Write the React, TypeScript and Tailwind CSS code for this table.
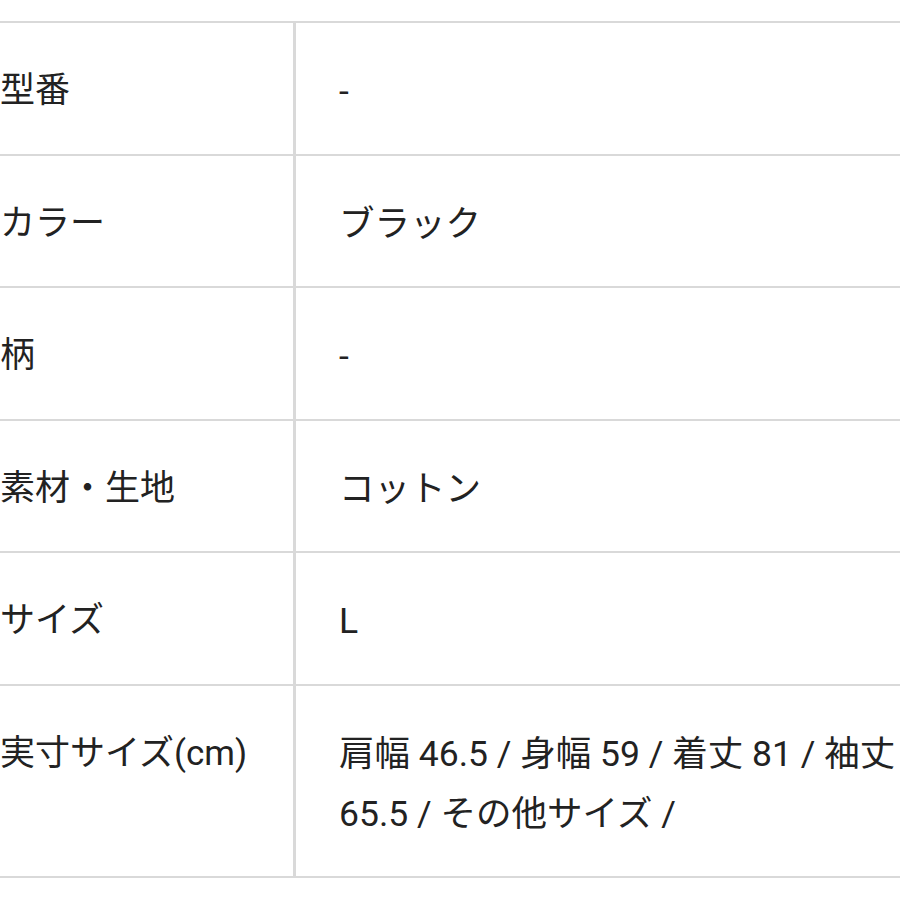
import React from "react";

const rows: [string, string][] = [
  ["型番", "-"],
  ["カラー", "ブラック"],
  ["柄", "-"],
  ["素材・生地", "コットン"],
  ["サイズ", "L"],
  ["実寸サイズ(cm)", "肩幅 46.5 / 身幅 59 / 着丈 81 / 袖丈 65.5 / その他サイズ /"],
];

export default function App() {
  return (
    <div
      className="w-[900px] h-[900px] bg-white overflow-hidden pt-[21px] text-[#222222]"
      style={{ fontFamily: 'Roboto, "Noto Sans CJK JP", sans-serif' }}
    >
      <div className="border-t-2 border-[#d9d9d9]">
        {rows.map(([k, v]) => (
          <div key={k} className="flex border-b-2 border-[#d9d9d9]">
            <div className="w-[296px] shrink-0 border-r-[3px] border-[#d9d9d9] pt-[38px] pb-[32.5px] text-[35px] leading-[60px] whitespace-nowrap">
              {k}
            </div>
            <div className="flex-1 pl-[43px] pt-[38px] pb-[32.5px] text-[35.5px] leading-[60px]">
              {v}
            </div>
          </div>
        ))}
      </div>
    </div>
  );
}
